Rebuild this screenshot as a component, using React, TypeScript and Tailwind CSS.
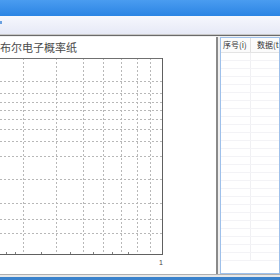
import * as React from "react"

const vLines = [23, 56, 83, 103, 121, 137, 150]
const hLines = [80, 92, 101, 109, 118, 128, 140, 155, 178, 202, 218, 232]
const ticks = [6, 15, 41, 70, 93, 112, 128]

function ProbabilityChart() {
    // chart top sits at page y=57
    const top = 57
    return (
        <svg width="168" height="212" className="block">
            {vLines.map((x) => (
                <line
                    key={`v${x}`}
                    x1={x + 0.5}
                    y1={0}
                    x2={x + 0.5}
                    y2={253 - top}
                    stroke="#b8b8b8"
                    strokeDasharray="2 2"
                />
            ))}
            {hLines.map((y) => (
                <line
                    key={`h${y}`}
                    x1={0}
                    y1={y - top + 0.5}
                    x2={162}
                    y2={y - top + 0.5}
                    stroke="#b8b8b8"
                    strokeDasharray="2 2"
                />
            ))}
            <line x1={0} y1={0.5} x2={162} y2={0.5} stroke="#707070" />
            <line x1={162.5} y1={0} x2={162.5} y2={253 - top} stroke="#606060" />
            <line x1={0} y1={253 - top + 0.5} x2={163} y2={253 - top + 0.5} stroke="#606060" />
            {ticks.map((x) => (
                <line
                    key={`t${x}`}
                    x1={x + 0.5}
                    y1={253 - top - 2}
                    x2={x + 0.5}
                    y2={253 - top}
                    stroke="#808080"
                />
            ))}
            <text
                x={159}
                y={264 - top}
                fontSize="7"
                fill="#444"
                fontFamily="Liberation Sans, sans-serif">
                1
            </text>
        </svg>
    )
}

function DataTable() {
    const rows = Array.from({ length: 26 })
    return (
        <div className="flex h-full flex-col overflow-hidden border border-[#9ec0ea] bg-white">
            <div className="flex h-[15px] shrink-0 items-center border-b border-[#e4e4e4] bg-[#fbfbfb] text-[8px] leading-none whitespace-nowrap text-[#333]">
                <div className="flex h-full w-[30px] shrink-0 items-center border-r border-[#e0e0e0] pl-[2px]">
                    序号(i)
                </div>
                <div className="flex h-full items-center pl-[6px]">数据(ti)</div>
            </div>
            <div className="flex flex-col">
                {rows.map((_, i) => (
                    <div
                        key={i}
                        className="flex h-[8px] shrink-0 border-b border-[#f3f3f6]">
                        <div className="w-[30px] border-r border-[#f0f0f3]" />
                        <div className="flex-1" />
                    </div>
                ))}
            </div>
        </div>
    )
}

export default function App() {
    return (
        <div
            className="flex h-[280px] w-[280px] flex-col overflow-hidden bg-[#f0f0f0]"
            style={{ fontFamily: '"Noto Sans CJK SC", sans-serif' }}>
            <div className="h-[16px] shrink-0 bg-gradient-to-b from-[#4a9cf0] to-[#2a84e4]" />
            <div className="relative h-[18px] shrink-0 bg-gradient-to-b from-[#f6f7fd] to-[#e6e9f6]">
                <div className="absolute left-0 top-[5px] h-[3px] w-[2px] bg-[#6aa0e0]" />
            </div>
            <div className="h-px shrink-0 bg-[#c8c8c8]" />
            <div className="h-px shrink-0 bg-[#6a6a6a]" />

            <div className="flex min-h-0 flex-1 pt-[1px]">
                <div className="flex w-[218px] shrink-0 flex-col border-r-2 border-r-[#8a8a8a] bg-white">
                    <div className="flex h-[21px] items-center text-[11px] leading-none text-[#4a4a4a]">
                        布尔电子概率纸
                    </div>
                    <ProbabilityChart />
                </div>
                <div className="w-[2px] shrink-0 bg-[#f0f0f0]" />
                <div className="min-w-0 flex-1">
                    <DataTable />
                </div>
            </div>

            <div className="h-px shrink-0 bg-[#b0b0b0]" />
            <div className="h-[2px] shrink-0 bg-[#e8e8e8]" />
            <div className="h-[3px] shrink-0 bg-[#3a82cc]" />
        </div>
    )
}
